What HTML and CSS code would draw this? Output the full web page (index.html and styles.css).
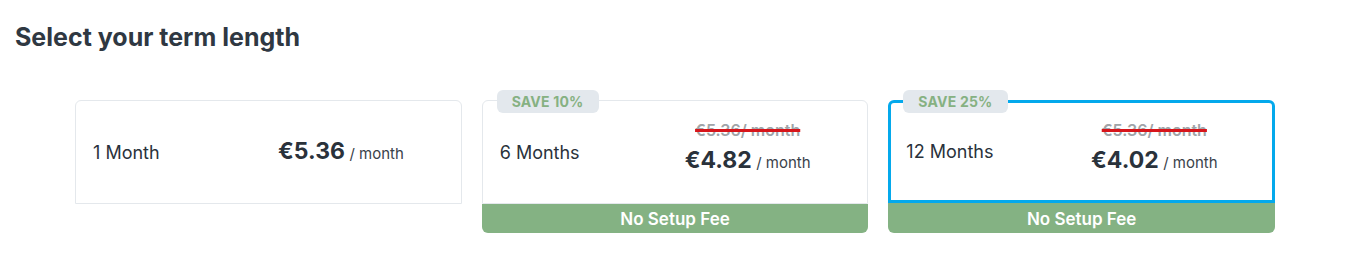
FILE: index.html
```html
<!DOCTYPE html>
<html lang="en">
<head>
<meta charset="utf-8">
<title>Select your term length</title>
<link rel="stylesheet" href="styles.css">
</head>
<body>
<section class="terms">
  <h2 class="terms-title">Select your term length</h2>
  <div class="plans">
    <div class="plan">
      <div class="plan-card">
        <div class="plan-label">1 Month</div>
        <div class="plan-price">
          <div class="price-now"><span class="amount">€5.36</span> <span class="per">/ month</span></div>
        </div>
      </div>
    </div>
    <div class="plan">
      <span class="badge">SAVE 10%</span>
      <div class="plan-card">
        <div class="plan-label">6 Months</div>
        <div class="plan-price">
          <div class="price-old">€5.36/ month</div>
          <div class="price-now"><span class="amount">€4.82</span> <span class="per">/ month</span></div>
        </div>
      </div>
      <div class="plan-footer">No Setup Fee</div>
    </div>
    <div class="plan is-selected">
      <span class="badge">SAVE 25%</span>
      <div class="plan-card">
        <div class="plan-label">12 Months</div>
        <div class="plan-price">
          <div class="price-old">€5.36/ month</div>
          <div class="price-now"><span class="amount">€4.02</span> <span class="per">/ month</span></div>
        </div>
      </div>
      <div class="plan-footer">No Setup Fee</div>
    </div>
  </div>
</section>
</body>
</html>
```

FILE: styles.css
```css
* { box-sizing: border-box; }
html, body { margin: 0; padding: 0; background: #ffffff; }
body {
  font-family: Inter, "Noto Sans", "Liberation Sans", sans-serif;
  color: #2d3741;
}
.terms { padding: 22px 0 0 15px; }
.terms-title {
  margin: 0;
  font-size: 25px;
  line-height: 30px;
  font-weight: 700;
  color: #2f3842;
}
.plans {
  display: grid;
  grid-template-columns: repeat(3, 1fr);
  column-gap: 20px;
  width: 1200px;
  margin: 48px 0 0 60px;
}
.plan { position: relative; display: flex; flex-direction: column; }
.plan-card {
  height: 104px;
  border: 1px solid #e4e8ec;
  border-radius: 6px 6px 0 0;
  display: flex;
  align-items: center;
  padding: 0 17px;
}
.is-selected .plan-card {
  border: 3px solid #04a9ec;
  height: 103px;
  padding: 0 15px;
}
.plan-label {
  width: 146px;
  font-size: 18px;
  color: #2a323b;
}
.plan-price {
  width: 204px;
  text-align: center;
  display: flex;
  flex-direction: column;
  align-items: center;
}
.price-old {
  font-size: 16px;
  font-weight: 600;
  color: #a0a4a8;
  line-height: 20px;
  text-decoration: line-through;
  text-decoration-color: #d7151b;
  text-decoration-thickness: 3px;
  margin-bottom: 5px;
  margin-top: -6px;
}
.price-now { white-space: nowrap; line-height: 30px; }
.amount { font-size: 23px; font-weight: 700; color: #2a323b; }
.per { font-size: 15px; color: #3a424a; }
.badge {
  position: absolute;
  top: -10px;
  left: 15px;
  height: 23px;
  padding: 0 15px;
  border-radius: 6px;
  background: #e3e8ed;
  color: #86b182;
  font-size: 14px;
  font-weight: 700;
  line-height: 23px;
  letter-spacing: 0.2px;
}
.plan-footer {
  height: 29px;
  background: #84b283;
  color: #ffffff;
  border-radius: 0 0 6px 6px;
  text-align: center;
  font-size: 17px;
  font-weight: 600;
  line-height: 31px;
}
.is-selected .plan-footer { height: 30px; line-height: 32px; }
```
